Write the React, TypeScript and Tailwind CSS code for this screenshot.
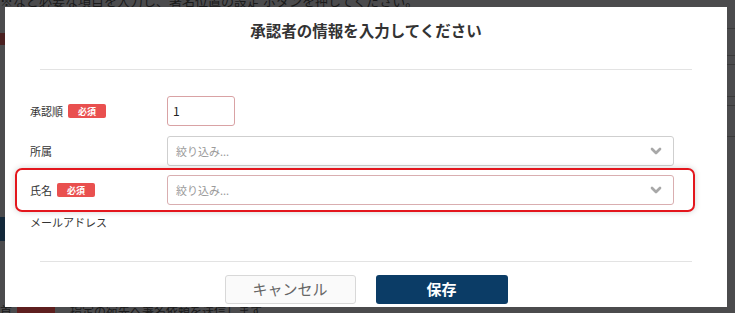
import { ChevronDown } from 'lucide-react';

const font = { fontFamily: '"Noto Sans CJK JP", "Noto Sans", sans-serif' };

const Badge = () => (
  <span className="ml-[5px] inline-flex h-[14px] w-[38px] items-center justify-center rounded-[2px] bg-[#e9504f] text-[9px] font-bold leading-none text-white">
    必須
  </span>
);

const SelectBox = ({ alert = false }: { alert?: boolean }) => (
  <div
    className={`flex h-[30px] flex-1 items-center justify-between rounded-[3px] border bg-white pl-[8px] pr-[9px] ${
      alert ? 'border-[#d9aeb0]' : 'border-[#cfcfcf]'
    }`}
  >
    <span className="text-[11px] text-[#9a9a9a]">絞り込み...</span>
    <ChevronDown size={16} strokeWidth={4} className="text-[#a8a8a8]" />
  </div>
);

const App = () => {
  return (
    <div className="relative h-[313px] w-[735px] overflow-hidden bg-[#4b4b4d]" style={font}>
      {/* page behind the dialog */}
      <div className="flex h-full flex-col">
        <div className="-mt-[7px] h-[15px] whitespace-nowrap text-[13px] leading-[15px] text-[#1a1a1a]">
          ※など必要な項目を入力し、署名位置の設定 ボタンを押してください。
        </div>
        <div className="mt-[25px] h-[12px] w-[5px] bg-[#4a2020]" />
        <div className="ml-auto mt-[-17px] flex w-[8px] flex-col">
          <div className="h-px bg-[#3a3a3a]" />
          <div className="mt-[26px] h-px bg-[#3a3a3a]" />
          <div className="mt-[8px] h-px bg-[#3a3a3a]" />
          <div className="mt-[31px] h-px bg-[#3a3a3a]" />
          <div className="mt-[8px] h-px bg-[#3a3a3a]" />
          <div className="mt-[30px] h-px bg-[#3a3a3a]" />
        </div>
        <div className="mt-[80px] h-[24px] w-[5px] bg-[#13283a]" />
        <div className="mt-auto flex h-[8px] items-start gap-[5px] whitespace-nowrap">
          <span className="text-[12px] leading-[12px] text-[#1a1a1a]">首</span>
          <span className="h-[10px] w-[38px] bg-[#5e1f1f]" />
          <span className="ml-[10px] text-[12px] leading-[12px] text-[#1a1a1a]">指定の宛先へ署名依頼を送信します</span>
        </div>
      </div>

      {/* dialog */}
      <div className="absolute left-[5px] top-[7px] flex h-[300px] w-[722px] flex-col bg-white">
        <h2 className="pt-[13px] text-center text-[15.5px] font-bold leading-[20px] text-[#333]">
          承認者の情報を入力してください
        </h2>
        <div className="mx-[35px] mt-[29px] h-px bg-[#e3e3e3]" />

        <div className="ml-[25px] mr-[53px] mt-[26px] flex flex-col text-[11px] text-[#333]">
          <div className="flex h-[30px] items-center">
            <div className="flex w-[137px] items-center">
              承認順
              <Badge />
            </div>
            <div className="flex h-[30px] w-[68px] items-center rounded-[3px] border border-[#d9a2a4] pl-[5px] text-[12px] text-[#222]">
              1
            </div>
          </div>

          <div className="mt-[10px] flex h-[30px] items-center">
            <div className="w-[137px]">所属</div>
            <SelectBox />
          </div>

          <div className="relative mt-[9px] flex h-[30px] items-center">
            <div className="pointer-events-none absolute -left-[15px] -right-[21px] -top-[7px] -bottom-[7px] rounded-[7px] border-2 border-[#e3161d] shadow-[0_0_6px_rgba(0,0,0,0.18)]" />
            <div className="flex w-[137px] items-center">
              氏名
              <Badge />
            </div>
            <SelectBox alert />
          </div>

          <div className="mt-[9px] leading-[16px]">メールアドレス</div>
        </div>

        <div className="mx-[35px] mt-[31px] h-px bg-[#e3e3e3]" />

        <div className="mt-[13px] flex justify-center gap-[20px]">
          <button className="h-[29px] w-[131px] rounded-[3px] border border-[#d8d8d8] bg-[#fafafa] text-[15px] text-[#666]">
            キャンセル
          </button>
          <button className="h-[29px] w-[132px] rounded-[3px] bg-[#0b3c66] text-[15px] font-bold text-white">
            保存
          </button>
        </div>
      </div>
    </div>
  );
};

export default App;
